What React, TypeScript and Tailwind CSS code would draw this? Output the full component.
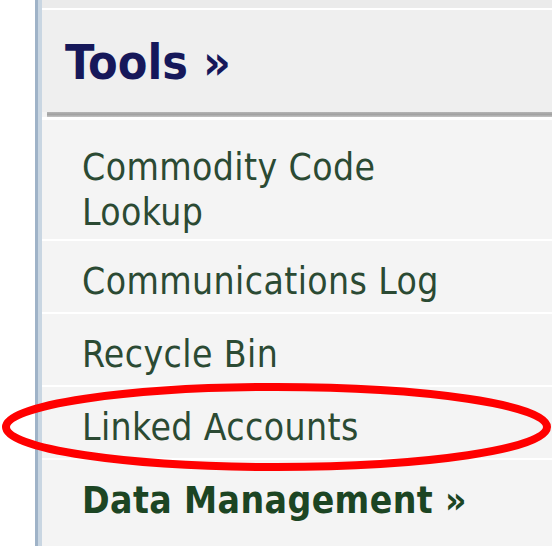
import React from "react";

const items: string[][] = [
  ["Commodity Code", "Lookup"],
  ["Communications Log"],
  ["Recycle Bin"],
  ["Linked Accounts"],
];

export default function App() {
  return (
    <div className="relative w-[552px] h-[546px] overflow-hidden bg-white flex font-['Tahoma','DejaVu_Sans_Condensed','DejaVu_Sans',sans-serif]">
      <div className="w-[35px] shrink-0 bg-white" />
      <div className="w-[7px] shrink-0 flex">
        <div className="w-[3px] bg-[#9fb3c8]" />
        <div className="w-[4px] bg-[#c9d6e2]" />
      </div>
      <div className="flex-1 flex flex-col bg-[#f4f4f4]">
        <div className="h-[10px] bg-[#ebebeb] border-b-2 border-white" />
        <div className="h-[102px] bg-[#efefef] flex items-center pl-[23px]">
          <span className="text-[48px] leading-none font-bold text-[#16185a] pt-[2px]">Tools »</span>
        </div>
        <div className="ml-[5px] h-[5px] bg-gradient-to-b from-[#b4b4b4] via-[#a2a2a2] to-[#c4c4c4]" />
        <div className="h-[3px] bg-white" />
        <ul className="flex flex-col text-[37px] leading-[45px] tracking-[0.4px]">
          {items.map((lines, i) => (
            <li
              key={i}
              className={`pl-[40px] border-b-2 border-white text-[#2b4a33] ${i === 0 ? "pt-[25px] pb-[4px]" : "pt-[18px] pb-[8px]"}`}
            >
              {lines.map((l) => (
                <div key={l}>{l}</div>
              ))}
            </li>
          ))}
          <li className="pl-[40px] pt-[18px] pb-[8px] font-bold text-[#1c4523]">
            Data Management »
          </li>
        </ul>
      </div>
      <svg className="absolute left-0 top-0 pointer-events-none" width="552" height="546">
        <ellipse cx="276.5" cy="427" rx="270.5" ry="40" fill="none" stroke="#ff0000" strokeWidth="8" />
      </svg>
    </div>
  );
}
